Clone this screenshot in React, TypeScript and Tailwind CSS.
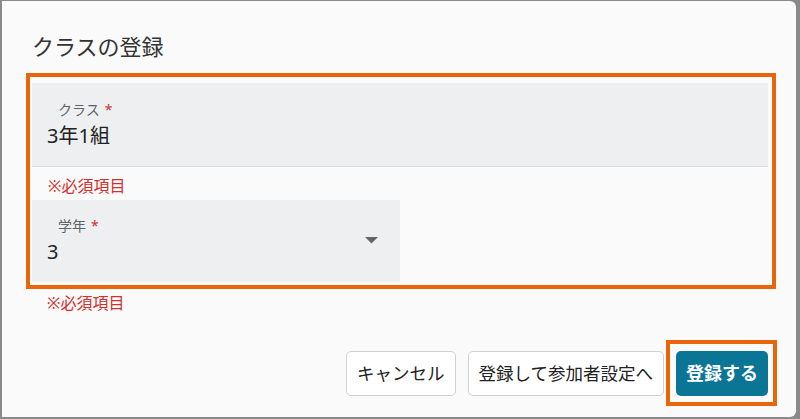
import { ReactNode } from 'react'

const font = { fontFamily: '"Noto Sans", "Noto Sans CJK JP", sans-serif' }

function Label({ text }: { text: string }) {
  return (
    <div className="ml-[11px] h-[20px] text-[14px] leading-[20px] text-[#5f6368]">
      {text}
      <span className="ml-[5px] text-[#d32f2f]">*</span>
    </div>
  )
}

function Helper() {
  return <p className="pl-[16px] text-[16px] leading-[22px] text-[#d32f2f]">※必須項目</p>
}

function Button({ children, primary }: { children: ReactNode; primary?: boolean }) {
  return (
    <button
      type="button"
      className={
        primary
          ? 'h-[45px] w-[92px] rounded-[5px] bg-[#0b7596] text-[18px] font-bold text-white'
          : 'h-[45px] rounded-[5px] border border-[#d0d0d0] bg-white px-[10px] text-[17.5px] text-[#222]'
      }
    >
      {children}
    </button>
  )
}

export default function App() {
  return (
    <div style={font} className="h-[419px] w-[800px] bg-[#8a8a8a] pb-[2px] pl-[2px] pr-[4px] pt-px">
      <div className="flex h-full flex-col rounded-r-[6px] bg-[#fafafa]">
        <h2 className="pl-[30px] pt-[30px] text-[22px] leading-[30px] text-[#333]">クラスの登録</h2>

        <div className="ml-[24px] mr-[20px] mt-[12px] border-[4px] border-[#e8650c] pb-[3px] pl-[2px] pr-[4px] pt-[6px]">
          <div className="h-[84px] border-b border-[#dcdde0] bg-[#eeeff1] pl-[15px] pt-[17px]">
            <Label text="クラス" />
            <div className="mt-[2px] text-[20px] leading-[28px] text-[#222]">3年1組</div>
          </div>
          <div className="mt-[8px]">
            <Helper />
          </div>
          <div className="mt-[3px] flex h-[82px] w-[368px] items-start bg-[#eeeff1] pl-[15px] pt-[16px]">
            <div className="flex-1">
              <Label text="学年" />
              <div className="mt-[2px] text-[20px] leading-[28px] text-[#222]">3</div>
            </div>
            <svg width="13" height="7" viewBox="0 0 13 7" className="mr-[22px] mt-[21px]">
              <path d="M0 0h13L6.5 6.5z" fill="#666" />
            </svg>
          </div>
        </div>

        <div className="mt-[3px] pl-[29px]">
          <Helper />
        </div>

        <div className="mr-[19px] mt-[26px] flex items-center justify-end">
          <Button>キャンセル</Button>
          <div className="ml-[12px]">
            <Button>登録して参加者設定へ</Button>
          </div>
          <div className="ml-[2px] border-[4px] border-[#e8650c] pb-[6px] pl-[6px] pr-[5px] pt-[7px]">
            <Button primary>登録する</Button>
          </div>
        </div>
      </div>
    </div>
  )
}
